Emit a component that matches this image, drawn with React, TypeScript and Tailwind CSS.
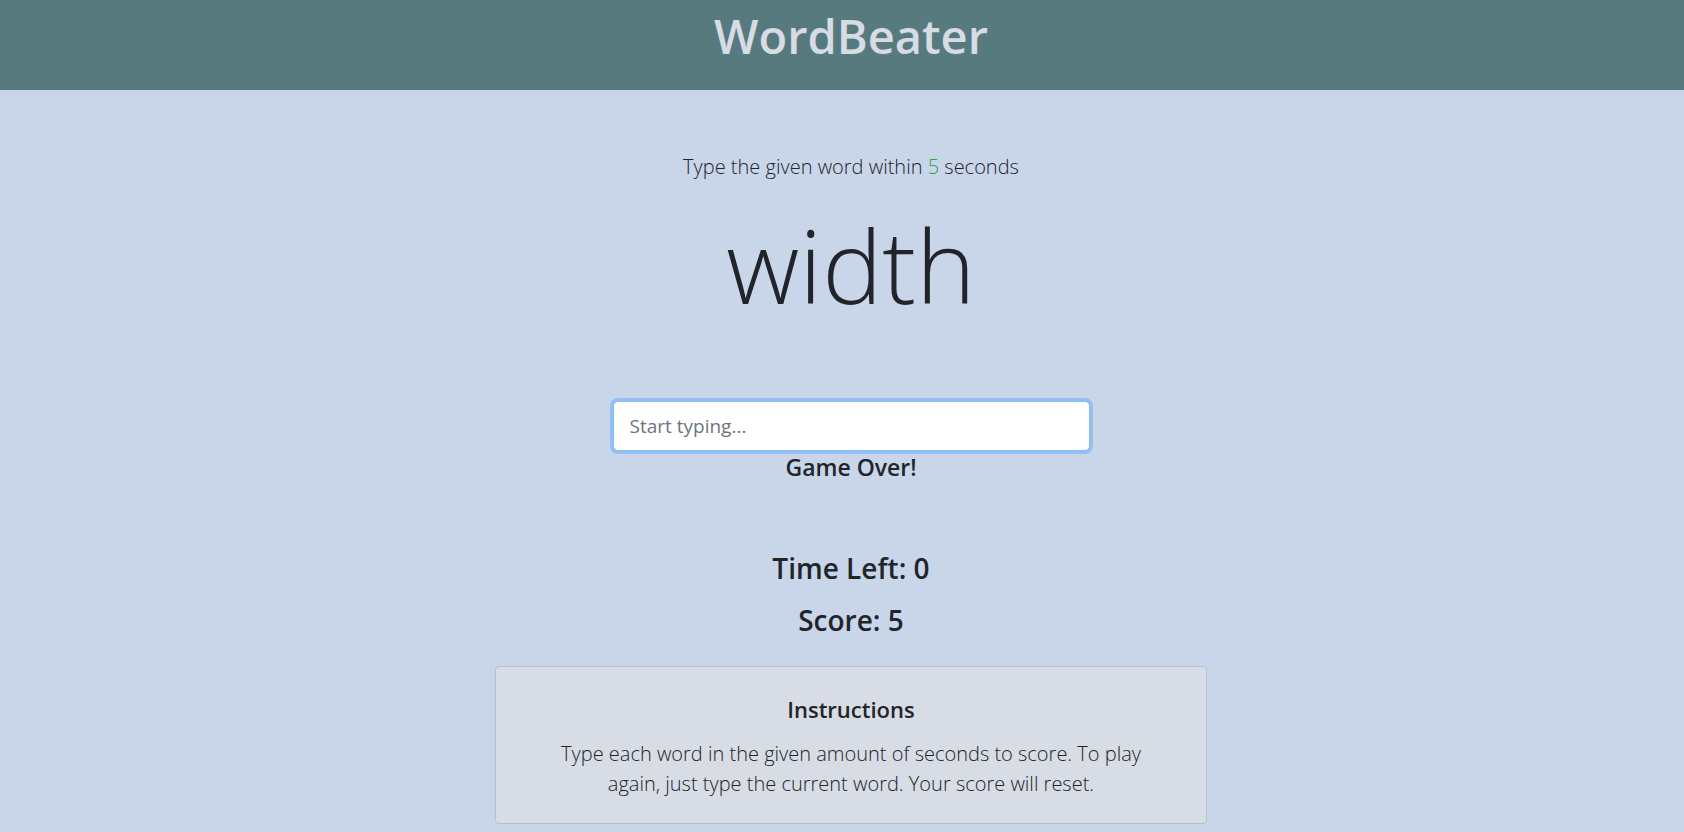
import React from "react";

export default function App() {
  return (
    <div className="min-h-[832px] bg-[#c9d5e9] text-[#212529]" style={{ fontFamily: '"Open Sans", "Noto Sans", sans-serif' }}>
      <header className="flex h-[90px] items-start justify-center bg-[#577a7e] pl-[18px] pt-[12px]">
        <h1 className="text-[47px] font-semibold leading-[48px] text-[#d7dbe4]">WordBeater</h1>
      </header>
      <main className="flex flex-col items-center pl-[18px] text-center">
        <p className="mt-[62px] text-[20px] font-light leading-[30px]">
          Type the given word within <span className="text-[#28a745]">5</span> seconds
        </p>
        <h2 className="mt-[23px] text-[101px] font-light leading-[120px]">width</h2>
        <input
          autoFocus
          placeholder="Start typing..."
          className="mt-[76px] h-[50px] w-[477px] rounded-[5px] border border-[#80bdff] bg-white px-4 text-[19px] text-[#495057] placeholder:text-[#6c757d] shadow-[0_0_0_3px_rgba(0,123,255,0.25)] outline-none caret-[#212529]"
        />
        <h4 className="mt-0 text-[23px] font-semibold leading-[32px]">Game Over!</h4>
        <h3 className="mt-[65px] text-[28px] font-semibold leading-[40px]">Time Left: 0</h3>
        <h3 className="mt-[12px] text-[28px] font-semibold leading-[40px]">Score: 5</h3>
        <div className="mt-[26px] w-[712px] rounded-[4px] border border-[#b9c1cd] bg-[#d8dce4] px-[55px] pt-[28px] pb-[24px]">
          <h5 className="text-[22px] font-semibold leading-[28px]">Instructions</h5>
          <p className="mt-[16px] text-[20px] font-light leading-[30px]">
            Type each word in the given amount of seconds to score. To play again, just type the current word. Your score will reset.
          </p>
        </div>
      </main>
    </div>
  );
}
